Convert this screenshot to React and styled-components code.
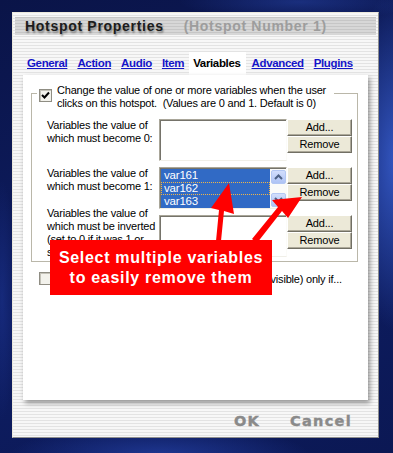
import React from 'react';
import styled, { createGlobalStyle } from 'styled-components';

const GlobalStyle = createGlobalStyle`
  html, body {
    margin: 0;
    padding: 0;
  }
  body {
    width: 393px;
    height: 453px;
    overflow: hidden;
    font-family: "Liberation Sans", Arial, sans-serif;
    background:
      radial-gradient(ellipse 50px 170px at 395px 160px, rgba(60, 100, 215, 0.8), transparent),
      radial-gradient(ellipse 150px 30px at 160px 455px, rgba(40, 70, 175, 0.65), transparent),
      radial-gradient(ellipse 120px 18px at 300px 2px, rgba(40, 70, 170, 0.5), transparent),
      radial-gradient(ellipse 14px 120px at 2px 300px, rgba(30, 55, 150, 0.5), transparent),
      linear-gradient(160deg, #0a1448 0%, #0e1d62 55%, #0b1854 100%);
  }
`;

const Stage = styled.div`
  position: relative;
  width: 393px;
  height: 453px;
  box-sizing: border-box;
  padding: 12px 0 0 12px;
`;

const Window = styled.div`
  width: 367px;
  height: 426px;
  box-sizing: border-box;
  border: 1px solid;
  border-color: #ebe8dc #8e8e8e #8e8e8e #ebe8dc;
  padding: 4px 2px 0;
  display: flex;
  flex-direction: column;
  background: repeating-linear-gradient(to bottom, #f7f7f7 0 2px, #e3e3e3 2px 3px);
`;

const TitleBar = styled.div`
  height: 18px;
  display: flex;
  align-items: center;
  padding-left: 10px;
  background: repeating-linear-gradient(to bottom, #c6c6c6 0 1px, #d7d7d7 1px 3px);
`;

const Title = styled.span`
  font-size: 14px;
  font-weight: bold;
  letter-spacing: 0.7px;
  color: ${(p) => (p.$dim ? '#9d9d9d' : '#1c1c1c')};
  margin-left: ${(p) => (p.$dim ? '20px' : '0')};
  text-shadow: ${(p) => (p.$dim ? 'none' : '1px 2px 2px rgba(0,0,0,0.4)')};
`;

const Tabs = styled.div`
  margin-top: 17px;
  height: 23px;
  display: flex;
  padding-left: 7px;
`;

const Tab = styled.span`
  padding: 0 5px 0 ${(p) => (p.$active ? '4px' : '5px')};
  line-height: 23px;
  font-size: 11.5px;
  font-weight: bold;
  letter-spacing: -0.35px;
  color: ${(p) => (p.$active ? '#000' : '#1414c8')};
  text-decoration: ${(p) => (p.$active ? 'none' : 'underline')};
  background: ${(p) => (p.$active ? '#fff' : 'transparent')};
  margin-right: ${(p) => (p.$active ? '1px' : '0')};
`;

const Panel = styled.div`
  position: relative;
  margin-left: 8px;
  width: 345px;
  height: 325px;
  box-sizing: border-box;
  padding-top: 1px;
  background: #fff;
  box-shadow: 2px 3px 5px rgba(0, 0, 0, 0.4);
  font-size: 11px;
  letter-spacing: -0.2px;
  color: #000;
`;

const GroupBox = styled.fieldset`
  margin: 0 10px 0 8px;
  padding: 9px 5px 4px 15px;
  border: 1px solid #bab7a9;
  min-width: 0;
`;

const Legend = styled.legend`
  margin-left: -10px;
  padding: 8px 8px 0 2px;
  display: flex;
  align-items: flex-start;
  gap: 5px;
  line-height: 13px;
  white-space: nowrap;
`;

const CheckBox = styled.span`
  flex: none;
  width: 13px;
  height: 13px;
  box-sizing: border-box;
  margin-top: ${(p) => p.$top || '0'};
  border: 1px solid #8f8d83;
  box-shadow: inset 1px 1px 0 #c4c2b8;
  background: #f3f2ec;
  display: flex;
  align-items: center;
  justify-content: center;
`;

const Rows = styled.div`
  display: flex;
  flex-direction: column;
  gap: 6px;
`;

const Row = styled.div`
  display: grid;
  grid-template-columns: 112px 128px 65px;
  height: 42px;
`;

const Label = styled.div`
  line-height: 13px;
  margin-top: ${(p) => (p.$lift ? '-8px' : '0')};
  white-space: nowrap;
`;

const ListBox = styled.div`
  box-sizing: border-box;
  height: 42px;
  display: flex;
  background: #fff;
  border: 1px solid;
  border-color: #a9a699 #fbfbf8 #f0efe8 #a9a699;
  box-shadow: inset 1px 1px 0 #75736a;
  padding: 1px 0 0 1px;
`;

const Items = styled.div`
  flex: 1;
  display: flex;
  flex-direction: column;
`;

const Item = styled.div`
  height: 13px;
  line-height: 13px;
  padding-left: 3px;
  font-size: 11.5px;
  color: #fff;
  background: #316ac5;
  outline: ${(p) => (p.$focus ? '1px dotted #f0b54a' : 'none')};
  outline-offset: -1px;
`;

const ScrollBar = styled.div`
  width: 16px;
  display: flex;
  flex-direction: column;
  justify-content: space-between;
  padding: 1px 0 1px 1px;
  box-sizing: border-box;
  background: #fbfbf9;
`;

const ScrollButton = styled.div`
  width: 15px;
  height: 14px;
  box-sizing: border-box;
  border: 1px solid #b3c7f3;
  border-radius: 2px;
  background: linear-gradient(#d2defc, #aec3f5);
  display: flex;
  align-items: center;
  justify-content: center;
`;

const Buttons = styled.div`
  display: flex;
  flex-direction: column;
`;

const Button = styled.div`
  height: 17px;
  box-sizing: border-box;
  border: 1px solid;
  border-color: #ffffff #716f64 #716f64 #ffffff;
  box-shadow: inset -1px -1px 0 #aca899;
  background: #ece9d8;
  font-size: 11px;
  line-height: 15px;
  text-align: center;
`;

const OptionRow = styled.div`
  margin: 10px 0 0 16px;
  display: flex;
  align-items: center;
  gap: 6px;
  white-space: nowrap;
`;

const Footer = styled.div`
  flex: 1;
  display: flex;
  justify-content: flex-end;
  align-items: center;
  gap: 30px;
  padding: 4px 24px 0 0;
`;

const FooterButton = styled.span`
  font-family: "DejaVu Sans", sans-serif;
  font-size: 14.5px;
  font-weight: bold;
  letter-spacing: 1.3px;
  color: #8a8a8a;
  -webkit-text-stroke: 0.4px #8a8a8a;
`;

const Arrows = styled.svg`
  position: absolute;
  left: 0;
  top: 0;
  pointer-events: none;
`;

const Callout = styled.div`
  position: absolute;
  left: 50px;
  top: 240px;
  width: 222px;
  height: 55px;
  background: #ff0000;
  display: flex;
  flex-direction: column;
  align-items: center;
  justify-content: center;
  color: #fff;
  font-family: "Liberation Sans", Arial, sans-serif;
  font-size: 16px;
  font-weight: bold;
  letter-spacing: 0.7px;
  line-height: 20px;
`;

const Check = () => (
  <svg width="9" height="9" viewBox="0 0 9 9">
    <path d="M1 4 L3.5 6.5 L8 1.5" fill="none" stroke="#000" strokeWidth="2" />
  </svg>
);

const Chevron = ({ up }) => (
  <svg width="9" height="6" viewBox="0 0 9 6">
    <path d={up ? 'M1 5 L4.5 1.5 L8 5' : 'M1 1 L4.5 4.5 L8 1'} fill="none" stroke="#4d6185" strokeWidth="2" />
  </svg>
);

const Actions = () => (
  <Buttons>
    <Button>Add...</Button>
    <Button>Remove</Button>
  </Buttons>
);

const tabs = ['General', 'Action', 'Audio', 'Item', 'Variables', 'Advanced', 'Plugins'];

export default function App() {
  return (
    <Stage>
      <GlobalStyle />
      <Window>
        <TitleBar>
          <Title>Hotspot Properties</Title>
          <Title $dim>(Hotspot Number 1)</Title>
        </TitleBar>
        <Tabs>
          {tabs.map((t) => (
            <Tab key={t} $active={t === 'Variables'}>
              {t}
            </Tab>
          ))}
        </Tabs>
        <Panel>
          <GroupBox>
            <Legend>
              <CheckBox $top="5px">
                <Check />
              </CheckBox>
              <span>
                Change the value of one or more variables when the user
                <br />
                clicks on this hotspot.&nbsp; (Values are 0 and 1. Default is 0)
              </span>
            </Legend>
            <Rows>
              <Row>
                <Label>
                  Variables the value of
                  <br />
                  which must become 0:
                </Label>
                <ListBox />
                <Actions />
              </Row>
              <Row>
                <Label>
                  Variables the value of
                  <br />
                  which must become 1:
                </Label>
                <ListBox>
                  <Items>
                    <Item>var161</Item>
                    <Item $focus>var162</Item>
                    <Item>var163</Item>
                  </Items>
                  <ScrollBar>
                    <ScrollButton>
                      <Chevron up />
                    </ScrollButton>
                    <ScrollButton>
                      <Chevron />
                    </ScrollButton>
                  </ScrollBar>
                </ListBox>
                <Actions />
              </Row>
              <Row>
                <Label $lift>
                  Variables the value of
                  <br />
                  which must be inverted
                  <br />
                  (set to 0 if it was 1 or
                  <br />
                  set to 1 if it was 0):
                </Label>
                <ListBox />
                <Actions />
              </Row>
            </Rows>
          </GroupBox>
          <OptionRow>
            <CheckBox />
            <span>Make the hotspot active (that is clickable and visible) only if...</span>
          </OptionRow>
        </Panel>
        <Footer>
          <FooterButton>OK</FooterButton>
          <FooterButton>Cancel</FooterButton>
        </Footer>
      </Window>
      <Arrows width="393" height="453">
        <polygon points="216,241 219,210 211,208 229,183 234,214 224,211 221,241" fill="#ff0000" />
        <polygon points="252,239 278,207 272,200 302,197 288,218 282,211 257,243" fill="#ff0000" />
      </Arrows>
      <Callout>
        <span>Select multiple variables</span>
        <span>to easily remove them</span>
      </Callout>
    </Stage>
  );
}
